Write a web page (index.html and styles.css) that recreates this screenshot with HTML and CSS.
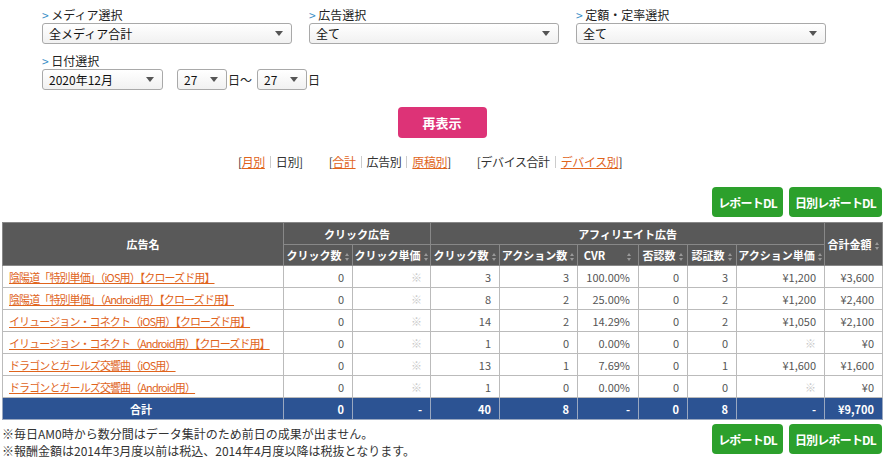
FILE: index.html
```html
<!DOCTYPE html>
<html lang="ja">
<head>
  <meta charset="UTF-8">
  <title>成果レポート</title>
  <link rel="stylesheet" href="styles.css">
</head>
<body>
  <div class="page">
    <div class="filters">
      <div class="filter-row">
        <div class="field">
          <label><span class="mark">&gt;</span> メディア選択</label>
          <div class="select wide"><select><option>全メディア合計</option></select></div>
        </div>
        <div class="field">
          <label><span class="mark">&gt;</span> 広告選択</label>
          <div class="select wide"><select><option>全て</option></select></div>
        </div>
        <div class="field">
          <label><span class="mark">&gt;</span> 定額・定率選択</label>
          <div class="select wide"><select><option>全て</option></select></div>
        </div>
      </div>
      <div class="field">
        <label><span class="mark">&gt;</span> 日付選択</label>
        <div class="date-row">
          <div class="select month"><select><option>2020年12月</option></select></div>
          <div class="select day"><select><option>27</option></select></div>
          <span class="unit">日〜</span>
          <div class="select day"><select><option>27</option></select></div>
          <span class="unit">日</span>
        </div>
      </div>
    </div>

    <div class="submit-row">
      <button class="btn-pink">再表示</button>
    </div>

    <div class="switches">
      <span class="group">[<a href="#">月別</a><i class="sep"></i>日別]</span>
      <span class="group">[<a href="#">合計</a><i class="sep"></i>広告別<i class="sep"></i><a href="#">原稿別</a>]</span>
      <span class="group">[デバイス合計<i class="sep"></i><a href="#">デバイス別</a>]</span>
    </div>

    <div class="dl-row">
      <button class="btn-green">レポートDL</button>
      <button class="btn-green">日別レポートDL</button>
    </div>

    <table class="report">
      <colgroup>
        <col class="c-name"><col class="c-69"><col class="c-78"><col class="c-69"><col class="c-78">
        <col class="c-61"><col class="c-49"><col class="c-49"><col class="c-88"><col class="c-58">
      </colgroup>
      <thead>
        <tr class="h1">
          <th rowspan="2">広告名</th>
          <th colspan="2">クリック広告</th>
          <th colspan="6">アフィリエイト広告</th>
          <th rowspan="2">合計金額<span class="sort"></span></th>
        </tr>
        <tr class="h2">
          <th>クリック数<span class="sort"></span></th>
          <th>クリック単価<span class="sort"></span></th>
          <th>クリック数<span class="sort"></span></th>
          <th>アクション数<span class="sort"></span></th>
          <th>CVR<span class="sort cvr"></span></th>
          <th>否認数<span class="sort"></span></th>
          <th>認証数<span class="sort"></span></th>
          <th>アクション単価<span class="sort"></span></th>
        </tr>
      </thead>
      <tbody>
        <tr>
          <td class="name"><a href="#">陰陽道「特別単価」（iOS用）【クローズド用】</a></td>
          <td>0</td><td class="na">※</td><td>3</td><td>3</td><td>100.00%</td><td>0</td><td>3</td><td>¥1,200</td><td>¥3,600</td>
        </tr>
        <tr>
          <td class="name"><a href="#">陰陽道「特別単価」（Android用）【クローズド用】</a></td>
          <td>0</td><td class="na">※</td><td>8</td><td>2</td><td>25.00%</td><td>0</td><td>2</td><td>¥1,200</td><td>¥2,400</td>
        </tr>
        <tr>
          <td class="name"><a href="#">イリュージョン・コネクト（iOS用）【クローズド用】</a></td>
          <td>0</td><td class="na">※</td><td>14</td><td>2</td><td>14.29%</td><td>0</td><td>2</td><td>¥1,050</td><td>¥2,100</td>
        </tr>
        <tr>
          <td class="name"><a href="#">イリュージョン・コネクト（Android用）【クローズド用】</a></td>
          <td>0</td><td class="na">※</td><td>1</td><td>0</td><td>0.00%</td><td>0</td><td>0</td><td class="na">※</td><td>¥0</td>
        </tr>
        <tr>
          <td class="name"><a href="#">ドラゴンとガールズ交響曲（iOS用）</a></td>
          <td>0</td><td class="na">※</td><td>13</td><td>1</td><td>7.69%</td><td>0</td><td>1</td><td>¥1,600</td><td>¥1,600</td>
        </tr>
        <tr>
          <td class="name"><a href="#">ドラゴンとガールズ交響曲（Android用）</a></td>
          <td>0</td><td class="na">※</td><td>1</td><td>0</td><td>0.00%</td><td>0</td><td>0</td><td class="na">※</td><td>¥0</td>
        </tr>
      </tbody>
      <tfoot>
        <tr>
          <td class="total-label">合計</td>
          <td>0</td><td>-</td><td>40</td><td>8</td><td>-</td><td>0</td><td>8</td><td>-</td><td>¥9,700</td>
        </tr>
      </tfoot>
    </table>

    <div class="bottom">
      <div class="notes">
        <p>※毎日AM0時から数分間はデータ集計のため前日の成果が出ません。</p>
        <p>※報酬金額は2014年3月度以前は税込、2014年4月度以降は税抜となります。</p>
      </div>
      <div class="dl-row low">
        <button class="btn-green">レポートDL</button>
        <button class="btn-green">日別レポートDL</button>
      </div>
    </div>
  </div>
</body>
</html>
```

FILE: styles.css
```css
body {
  margin: 0;
  background: #fff;
  font-family: "Noto Sans CJK JP", "Noto Sans", sans-serif;
  font-size: 12px;
  color: #333;
}
.page {
  width: 880px;
  margin-left: 2px;
}

/* filters */
.filters {
  padding: 6px 0 0 40px;
}
.filter-row {
  display: flex;
  gap: 17px;
}
.field label {
  display: block;
  height: 17px;
  line-height: 17px;
  font-size: 12px;
  color: #222;
}
.mark {
  color: #3a8fc7;
}
.select {
  position: relative;
  height: 21px;
  box-sizing: border-box;
  border: 1px solid #a9a9a9;
  border-radius: 3px;
  background: linear-gradient(#fff, #f1f1f1);
}
.select select {
  appearance: none;
  -webkit-appearance: none;
  border: none;
  background: transparent;
  width: 100%;
  height: 19px;
  padding: 0 0 0 6px;
  font-family: inherit;
  font-size: 12px;
  color: #111;
}
.select::after {
  content: "";
  position: absolute;
  right: 8px;
  top: 7px;
  border-left: 4px solid transparent;
  border-right: 4px solid transparent;
  border-top: 5px solid #555;
}
.wide { width: 250px; }
.filters > .field {
  margin-top: 8px;
}
.date-row {
  display: flex;
  align-items: center;
}
.month { width: 121px; margin-right: 14px; }
.day { width: 50px; }
.unit {
  margin: 0 5px 0 1px;
  color: #222;
}

/* redisplay */
.submit-row {
  display: flex;
  justify-content: center;
  margin-top: 17px;
}
.btn-pink {
  width: 89px;
  height: 31px;
  border: none;
  border-radius: 4px;
  background: #dd3377;
  color: #fff;
  font-family: inherit;
  font-size: 13px;
  font-weight: bold;
}

.switches {
  display: flex;
  justify-content: center;
  gap: 26px;
  margin-top: 15px;
  height: 18px;
  line-height: 18px;
  color: #333;
  letter-spacing: -0.4px;
  padding-right: 24px;
}
.switches a {
  color: #e0641c;
}
.sep {
  display: inline-block;
  width: 1px;
  height: 12px;
  background: #ccc;
  margin: 0 5px;
  vertical-align: -1px;
}

/* download buttons */
.dl-row {
  display: flex;
  justify-content: flex-end;
  gap: 6px;
  margin-top: 16px;
}
.btn-green {
  height: 30px;
  padding: 0 6px;
  border: none;
  border-radius: 4px;
  background: #2ca02c;
  color: #fff;
  font-family: inherit;
  font-size: 12px;
  font-weight: bold;
  letter-spacing: -0.8px;
}

/* table */
.report {
  width: 880px;
  table-layout: fixed;
  border-collapse: collapse;
  margin-top: 5px;
}
.c-name { width: 281px; }
.c-69 { width: 69px; }
.c-78 { width: 78px; }
.c-61 { width: 61px; }
.c-49 { width: 49px; }
.c-88 { width: 88px; }
.c-58 { width: 58px; }
.report th {
  background: #595959;
  color: #fff;
  font-size: 11px;
  font-weight: bold;
  border: 1px solid #888;
  padding: 0;
  white-space: nowrap;
}
.report .h1 th { height: 21px; }
.report .h2 th { height: 20px; }
.sort {
  display: inline-block;
  position: relative;
  width: 5px;
  height: 8px;
  margin-left: 3px;
  vertical-align: -1px;
}
.sort::before,
.sort::after {
  content: "";
  position: absolute;
  left: 0;
  border-left: 2.5px solid transparent;
  border-right: 2.5px solid transparent;
}
.sort::before { top: 0; border-bottom: 3px solid #9a9a9a; }
.sort::after { bottom: 0; border-top: 3px solid #9a9a9a; }
.sort.cvr { margin-left: 22px; }
.report td {
  height: 21px;
  border: 1px solid #bbb;
  padding: 0 8px 0 4px;
  text-align: right;
  color: #555;
  font-size: 11px;
  white-space: nowrap;
}
.report td.name {
  text-align: left;
  padding-left: 6px;
  letter-spacing: -0.9px;
}
.report td.name a {
  color: #e0641c;
  text-decoration: underline;
}
.report td.na {
  color: #c8c8c8;
}
.report tfoot td {
  background: #2c5393;
  color: #fff;
  font-weight: bold;
  border-color: #9aa8c0;
}
.report tfoot td.total-label {
  text-align: center;
}

/* footer */
.bottom {
  display: flex;
  justify-content: space-between;
  align-items: flex-start;
}
.notes p {
  margin: 0;
  line-height: 17px;
  color: #333;
}
.notes {
  padding-top: 5px;
}
.dl-row.low {
  margin-top: 4px;
}
```
